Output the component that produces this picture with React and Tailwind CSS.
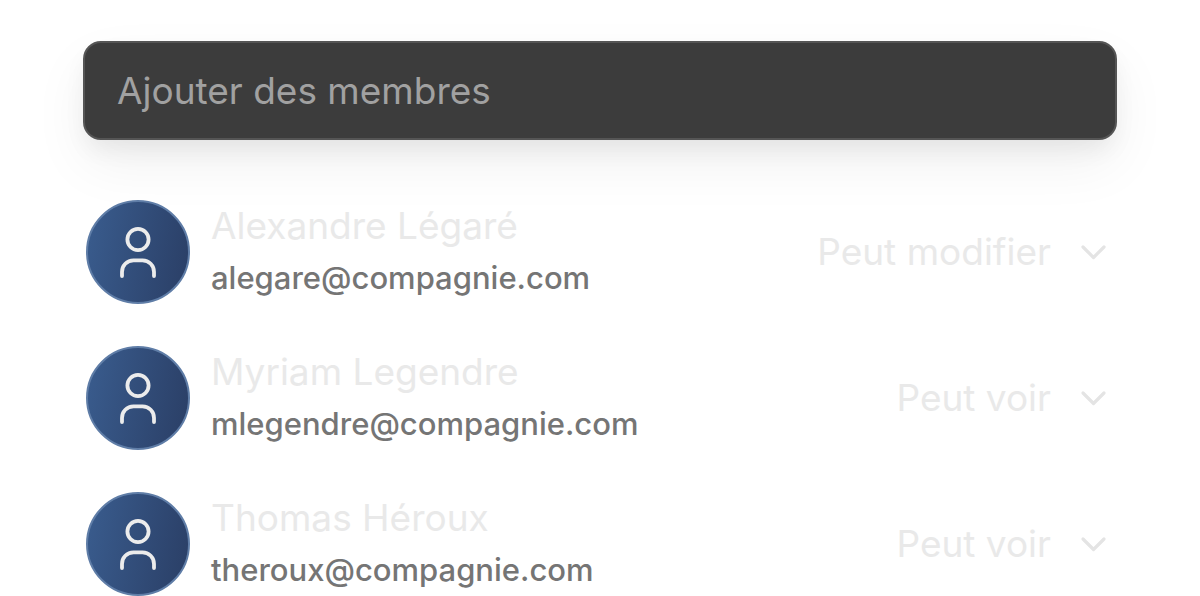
const members = [
  { name: "Alexandre Légaré", email: "alegare@compagnie.com", access: "edit" },
  { name: "Myriam Legendre", email: "mlegendre@compagnie.com", access: "view" },
  { name: "Thomas Héroux", email: "theroux@compagnie.com", access: "view" },
];

function Avatar() {
  return (
    <span className="flex size-[104px] shrink-0 items-center justify-center rounded-full border-2 border-[#5f7da7] bg-linear-100 from-[#3a5d8f] to-[#2a3e65] bg-origin-border">
      <svg
        className="h-[52px] w-9"
        viewBox="0 0 36 52"
        fill="none"
        stroke="#ececec"
        strokeWidth="3.8"
        strokeLinecap="round"
        aria-hidden="true"
      >
        <circle cx="18" cy="13.5" r="10.6" />
        <path d="M2 50V46A11.5 11.5 0 0 1 13.5 34.3H22.5A11.5 11.5 0 0 1 34 46V50" />
      </svg>
    </span>
  );
}

function AccessSelect({ name, access }) {
  return (
    <div className="grid items-center">
      <select
        aria-label={"Accès de " + name}
        defaultValue={access}
        className="col-start-1 row-start-1 appearance-none bg-transparent pr-[57px] text-[37px] leading-[52px] text-[#e9e9e9] [field-sizing:content]"
      >
        <option value="edit">Peut modifier</option>
        <option value="view">Peut voir</option>
      </select>
      <svg
        className="pointer-events-none col-start-1 row-start-1 h-4 w-7 justify-self-end"
        viewBox="0 0 28 16"
        fill="none"
        stroke="#e4e4e4"
        strokeWidth="3.2"
        strokeLinecap="round"
        strokeLinejoin="round"
        aria-hidden="true"
      >
        <path d="M3 3L13.5 13.5L24 3" />
      </svg>
    </div>
  );
}

export default function App() {
  return (
    <main className="bg-white px-[83px] pt-[41px] font-['Inter',sans-serif]">
      <input
        type="text"
        aria-label="Ajouter des membres"
        placeholder="Ajouter des membres"
        className="block h-[99px] w-full rounded-[18px] border-2 border-[#555555] bg-[#3c3c3c] px-8 text-[37px] text-white shadow-[0_24px_56px_rgba(0,0,0,0.06),0_12px_24px_-4px_rgba(0,0,0,0.07)] placeholder:text-[#a1a1a1] placeholder:opacity-100"
      />
      <ul className="mt-[60px] flex flex-col gap-[42px] pr-[9px] pl-[3px]">
        {members.map((m) => (
          <li key={m.email} className="flex items-center justify-between">
            <div className="flex items-center gap-[21px]">
              <Avatar />
              <div>
                <p className="text-[37px] leading-[52px] text-[#e9e9e9]">{m.name}</p>
                <p className="text-[31px] leading-[52px] font-medium text-[#757575]">{m.email}</p>
              </div>
            </div>
            <AccessSelect name={m.name} access={m.access} />
          </li>
        ))}
      </ul>
    </main>
  );
}
